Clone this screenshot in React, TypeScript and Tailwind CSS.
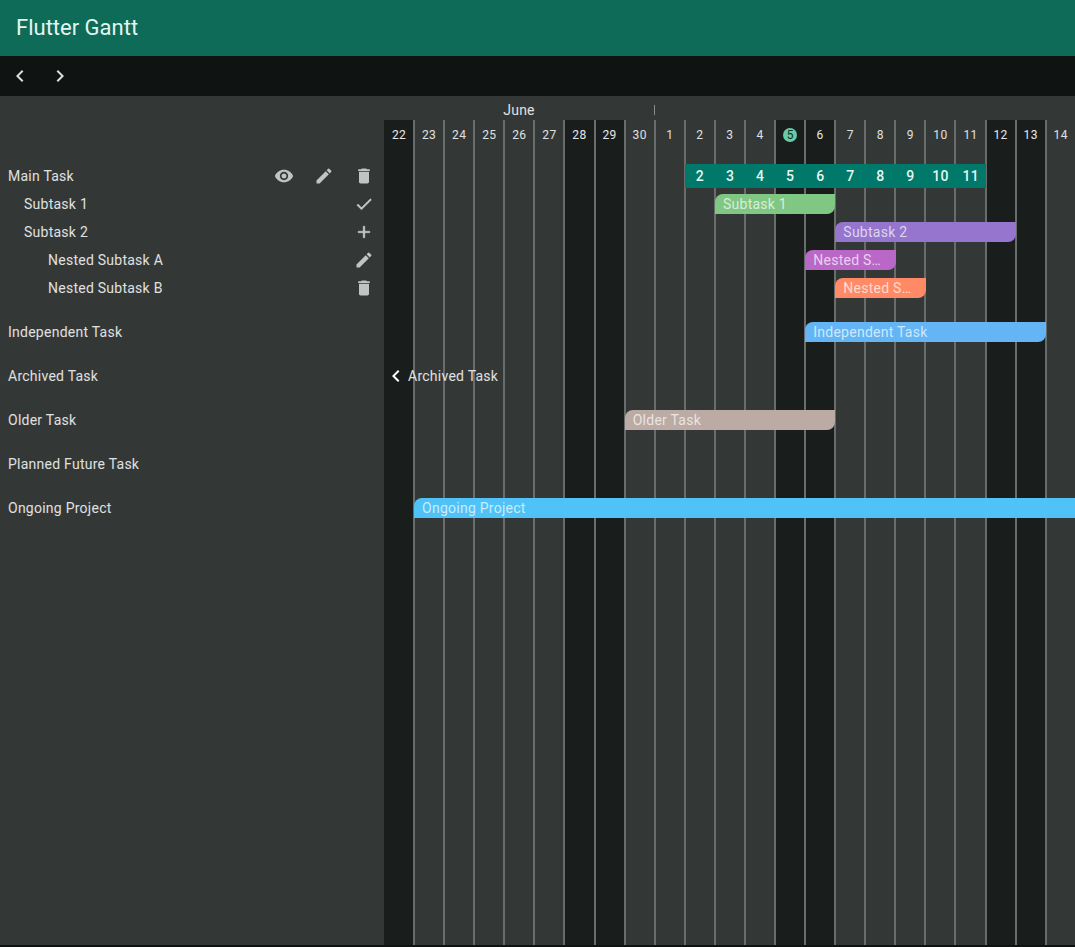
import { MdVisibility, MdEdit, MdDelete, MdChevronLeft, MdChevronRight } from "react-icons/md";
import type { ComponentType } from "react";

const DAY = 30.09;
const days = [22, 23, 24, 25, 26, 27, 28, 29, 30, 1, 2, 3, 4, 5, 6, 7, 8, 9, 10, 11, 12, 13, 14];
const weekend = new Set([0, 6, 7, 13, 14, 20, 21]);
const mainDays = [2, 3, 4, 5, 6, 7, 8, 9, 10, 11];

type IconProps = { size?: number };

function CheckIcon({ size = 20 }: IconProps) {
  return (
    <svg width={size} height={size} viewBox="0 0 24 24" fill="currentColor" stroke="currentColor" strokeWidth={0.5}>
      <path d="M9 16.17L4.83 12l-1.42 1.41L9 19 21 7l-1.41-1.41z" />
    </svg>
  );
}

function AddIcon({ size = 20 }: IconProps) {
  return (
    <svg width={size} height={size} viewBox="0 0 24 24" fill="currentColor" stroke="currentColor" strokeWidth={0.5}>
      <path d="M19 13h-6v6h-2v-6H5v-2h6V5h2v6h6v2z" />
    </svg>
  );
}

function Bar({ start, span, color, label }: { start: number; span: number; color: string; label: string }) {
  return (
    <div
      className={`h-5 shrink-0 overflow-hidden rounded-tl-lg rounded-br-lg pl-2 text-sm leading-5 tracking-[0.25px] whitespace-nowrap text-white/70 ${color}`}
      style={{ marginLeft: start * DAY, width: span * DAY }}
    >
      {label}
    </div>
  );
}

function Row({ tall, children }: { tall?: boolean; children?: React.ReactNode }) {
  return <div className={`flex items-center ${tall ? "h-11" : "h-7"}`}>{children}</div>;
}

function Label({ indent, text, icons, tall }: { indent: string; text: string; icons?: ComponentType<IconProps>[]; tall?: boolean }) {
  return (
    <div className={`flex items-center justify-between ${tall ? "h-11" : "h-7"} ${indent}`}>
      <span className="text-sm tracking-[0.25px] text-white/85">{text}</span>
      <div className="flex">
        {(icons ?? []).map((I, i) => (
          <span key={i} className="flex w-10 justify-center text-white/70">
            <I size={20} />
          </span>
        ))}
      </div>
    </div>
  );
}

export default function App() {
  return (
    <div className="flex h-screen flex-col overflow-hidden font-['Roboto',sans-serif]">
      <header className="flex h-14 shrink-0 items-center bg-[#0e6b58] px-4 pb-[2px] text-[22px] font-normal text-[#e4f5ef]">
        Flutter Gantt
      </header>
      <nav className="flex h-10 shrink-0 items-center bg-[#0f1312] text-[#dcdddd]">
        <span className="flex w-10 justify-center"><MdChevronLeft size={24} /></span>
        <span className="flex w-10 justify-center"><MdChevronRight size={24} /></span>
      </nav>
      <main className="flex min-h-0 flex-1 border-b-2 border-[#0f1312] bg-[#333736]">
        <aside className="w-[384px] shrink-0 pt-[66px]">
          <div className="pb-2">
            <Label indent="pl-2" text="Main Task" icons={[MdVisibility, MdEdit, MdDelete]} />
            <Label indent="pl-6" text="Subtask 1" icons={[CheckIcon]} />
            <Label indent="pl-6" text="Subtask 2" icons={[AddIcon]} />
            <Label indent="pl-12" text="Nested Subtask A" icons={[MdEdit]} />
            <Label indent="pl-12" text="Nested Subtask B" icons={[MdDelete]} />
          </div>
          <Label tall indent="pl-2" text="Independent Task" />
          <Label tall indent="pl-2" text="Archived Task" />
          <Label tall indent="pl-2" text="Older Task" />
          <Label tall indent="pl-2" text="Planned Future Task" />
          <Label tall indent="pl-2" text="Ongoing Project" />
        </aside>
        <section className="flex min-w-0 flex-1 flex-col overflow-hidden">
          <div className="flex h-6 shrink-0 items-center text-sm tracking-[0.25px] text-white/85">
            <div className="w-[270px] pt-[4px] text-center">June</div>
            <div className="mt-[4px] h-2.5 w-px bg-[#8a8d8c]" />
          </div>
          <div className="grid min-h-0 flex-1 grid-cols-1 grid-rows-1">
            <div className="col-start-1 row-start-1 flex">
              {days.map((d, i) => (
                <div
                  key={i}
                  style={{ width: DAY }}
                  className={`box-border flex h-full shrink-0 justify-center border-x border-[#686c6b] pt-[7px] text-xs leading-4 tracking-[0.4px] first:border-l-0 first:pl-px ${weekend.has(i) ? "bg-[#191d1c] text-white/90" : "text-white/85"}`}
                >
                  {d === 5 ? (
                    <span className="mt-px flex size-[14px] items-center justify-center rounded-full bg-[#66cba6] tracking-normal text-[#14302a]">5</span>
                  ) : (
                    d
                  )}
                </div>
              ))}
            </div>
            <div className="col-start-1 row-start-1 min-w-0 pt-[42px]">
              <div className="pb-2">
                <Row>
                  <div className="flex h-6 shrink-0 bg-[#00796b]" style={{ marginLeft: 10 * DAY }}>
                    {mainDays.map((d) => (
                      <span key={d} style={{ width: DAY }} className="text-center text-sm leading-6 font-medium tracking-[0.25px] text-[#e4f7f2]">{d}</span>
                    ))}
                  </div>
                </Row>
                <Row><Bar start={11} span={4} color="bg-[#81c784]" label="Subtask 1" /></Row>
                <Row><Bar start={15} span={6} color="bg-[#9575cd]" label="Subtask 2" /></Row>
                <Row><Bar start={14} span={3} color="bg-[#ba68c8]" label="Nested S…" /></Row>
                <Row><Bar start={15} span={3} color="bg-[#ff8a65]" label="Nested S…" /></Row>
              </div>
              <Row tall><Bar start={14} span={8} color="bg-[#64b5f6]" label="Independent Task" /></Row>
              <Row tall>
                <div className="flex items-center text-sm tracking-[0.25px] text-white/85">
                  <MdChevronLeft size={24} className="text-white" />
                  <span>Archived Task</span>
                </div>
              </Row>
              <Row tall><Bar start={8} span={7} color="bg-[#bcaaa4]" label="Older Task" /></Row>
              <Row tall />
              <Row tall><Bar start={1} span={30} color="bg-[#4fc3f7]" label="Ongoing Project" /></Row>
            </div>
          </div>
        </section>
      </main>
    </div>
  );
}
